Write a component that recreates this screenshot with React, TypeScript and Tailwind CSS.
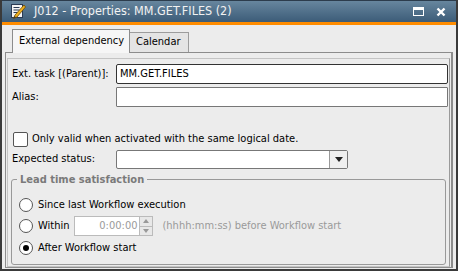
import React from "react";

function TitleIcon() {
  return (
    <svg width="16" height="17" viewBox="0 0 16 17">
      <rect x="1.5" y="1.5" width="11" height="13" fill="#f4f4f4" stroke="#2a3b55" />
      <path d="M3.5 4.5h6M3.5 7h6M3.5 9.5h4" stroke="#2a3b55" strokeWidth="1" />
      <path d="M14 2 L5 12 L3.5 15.5 L7 14 L15.5 4 Z" fill="#f0b020" stroke="#6b4a00" strokeWidth="0.8" />
      <path d="M3.5 15.5 L4.6 13 L6 14.3 Z" fill="#333" />
    </svg>
  );
}

function Radio({ checked }: { checked?: boolean }) {
  return (
    <span className="w-[14px] h-[14px] rounded-full border border-[#555] bg-white flex items-center justify-center shrink-0">
      {checked && <span className="w-[6px] h-[6px] rounded-full bg-black" />}
    </span>
  );
}

export default function App() {
  return (
    <div
      className="w-[458px] h-[271px] flex flex-col bg-[#ececec] border-x-2 border-b-2 border-[#3a3a3a] text-[11px] text-black overflow-hidden whitespace-nowrap"
      style={{ fontFamily: "'DejaVu Sans Condensed', 'Liberation Sans', sans-serif" }}
    >
      {/* Title bar */}
      <div className="h-[22px] flex items-center bg-gradient-to-b from-[#67869e] to-[#3c5c78] border-t border-[#2c3c4c] pl-[8px] pr-[10px] shrink-0">
        <TitleIcon />
        <span className="ml-[8px] text-[12.5px] text-[#f2f2f2]">
          J012 - Properties: MM.GET.FILES (2)
        </span>
        <div className="ml-auto flex items-center gap-[12px]">
          <span className="w-[11px] h-[9px] border border-white border-t-[3px]" />
          <svg width="10" height="10" viewBox="0 0 10 10">
            <path d="M1.5 1.5 L8.5 8.5 M8.5 1.5 L1.5 8.5" stroke="white" strokeWidth="2.4" />
          </svg>
        </div>
      </div>
      <div className="h-[3px] bg-[#ff8c00] shrink-0" />

      {/* Tabs */}
      <div className="flex items-end pl-[10px] pt-[3px] h-[27px] shrink-0">
        <div className="h-[24px] w-[118px] pl-[6px] flex items-center bg-[#f6f6f6] border border-b-0 border-[#8c8c8c] relative top-[1px] z-10">
          External dependency
        </div>
        <div className="h-[20px] w-[59px] pl-[6px] flex items-center bg-[#e4e4e4] border border-l-0 border-b-0 border-[#9c9c9c]">
          Calendar
        </div>
      </div>

      {/* Tab panel */}
      <div className="flex-1 mx-[3px] mb-[1px] border border-[#8c8c8c] border-r-2 pt-[5px] px-[1px] pb-0 flex">
        <div className="flex-1 border border-[#c4c4c4] border-r-[#9a9a9a] pl-[4px] pr-[1px] pt-[5px] flex flex-col">
          <div className="flex items-center h-[20px]">
            <span className="w-[104px]">Ext. task [(Parent)]:</span>
            <div className="flex-1 h-[20px] bg-white border border-[#333] rounded-[2px] flex items-center px-[3px]">
              MM.GET.FILES
            </div>
          </div>
          <div className="flex items-center h-[20px] mt-[3px]">
            <span className="w-[104px]">Alias:</span>
            <div className="flex-1 h-[20px] bg-white border border-[#777] rounded-[1px]" />
          </div>

          <div className="flex items-center mt-[24px] h-[16px]">
            <span className="w-[15px] h-[15px] ml-[1px] bg-white border border-[#555] rounded-[2px]" />
            <span className="ml-[4px]">Only valid when activated with the same logical date.</span>
          </div>

          <div className="flex items-center mt-[3px] h-[19px]">
            <span className="w-[104px]">Expected status:</span>
            <div className="w-[232px] h-[19px] bg-white border border-[#777] rounded-[2px] flex justify-end">
              <span className="w-[18px] h-full border-l border-[#999] bg-[#efefef] flex items-center justify-center">
                <svg width="8" height="5" viewBox="0 0 8 5">
                  <path d="M0 0 H8 L4 5 Z" fill="#222" />
                </svg>
              </span>
            </div>
          </div>

          {/* Group box */}
          <div className="relative mt-[10px] -ml-[1px] mr-[2px] flex-1 border border-[#999] rounded-[3px] mb-[1px] px-[7px] pt-[17px]">
            <span className="absolute -top-[8px] left-[5px] px-[3px] bg-[#ececec] font-bold text-[#7a7a7a]">
              Lead time satisfaction
            </span>
            <div className="flex flex-col gap-[3px]">
              <div className="flex items-center h-[16px] gap-[5px]">
                <Radio />
                <span>Since last Workflow execution</span>
              </div>
              <div className="flex items-center h-[20px] gap-[5px]">
                <Radio />
                <span>Within</span>
                <div className="w-[79px] h-[20px] bg-white border border-[#bbb] flex">
                  <span className="flex-1 flex items-center justify-end pr-[2px] text-[#9a9a9a]">0:00:00</span>
                  <span className="w-[13px] border-l border-[#bbb] flex flex-col bg-[#e8e8e8]">
                    <span className="flex-1 flex items-center justify-center border-b border-[#bbb]">
                      <svg width="6" height="4" viewBox="0 0 6 4"><path d="M0 4 H6 L3 0 Z" fill="#999" /></svg>
                    </span>
                    <span className="flex-1 flex items-center justify-center">
                      <svg width="6" height="4" viewBox="0 0 6 4"><path d="M0 0 H6 L3 4 Z" fill="#999" /></svg>
                    </span>
                  </span>
                </div>
                <span className="ml-[4px] text-[#9a9a9a]">(hhhh:mm:ss) before Workflow start</span>
              </div>
              <div className="flex items-center h-[16px] gap-[5px] mt-[1px]">
                <Radio checked />
                <span>After Workflow start</span>
              </div>
            </div>
          </div>
        </div>
      </div>
    </div>
  );
}
